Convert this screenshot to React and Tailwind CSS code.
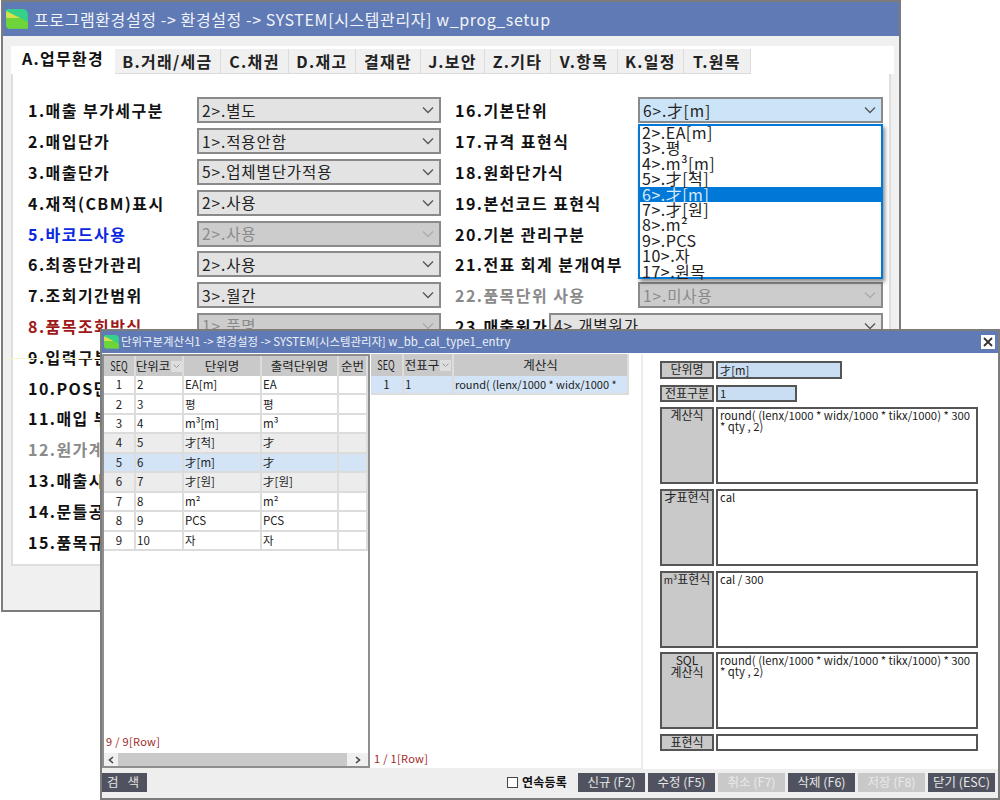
import React from "react";

const FONT = "font-['Noto_Sans_CJK_KR','Liberation_Sans',sans-serif]";

function Logo({ size = 22 }) {
  return (
    <svg width={size} height={size * 0.9} viewBox="0 0 22 20" className="shrink-0">
      <path d="M0 2 Q0 0 2 0 L16 0 Q22 0 22 6 L22 20 L4 20 Q0 20 0 16 Z" fill="#35d08a" />
      <path d="M0 2 L22 13 L22 20 L4 20 Q0 20 0 16 Z" fill="#6fd43a" />
      <path d="M0 2 L14 9 L0 9 Z" fill="#d5e04a" />
    </svg>
  );
}

function Chevron({ color = "#555" }) {
  return (
    <svg width="12" height="8" viewBox="0 0 12 8" className="shrink-0">
      <path d="M1 1.5 L6 6.5 L11 1.5" fill="none" stroke={color} strokeWidth="1.3" />
    </svg>
  );
}

function Select({ value, disabled, focus }) {
  const bg = disabled ? "bg-[#cccccc] text-[#8a8a8a]" : focus ? "bg-[#cce4f7] text-[#222]" : "bg-[#e3e3e3] text-[#222]";
  return (
    <div className={`flex-1 h-[26px] border-2 border-[#8a8a8a] flex items-center justify-between pl-[3px] pr-[5px] text-[15.5px] tracking-[0.9px] whitespace-nowrap ${bg}`}>
      <span>{value}</span>
      <Chevron color={disabled ? "#aaa" : "#555"} />
    </div>
  );
}

const leftRows = [
  ["1.매출 부가세구분", "2>.별도"],
  ["2.매입단가", "1>.적용안함"],
  ["3.매출단가", "5>.업체별단가적용"],
  ["4.재적(CBM)표시", "2>.사용"],
  ["5.바코드사용", "2>.사용", "text-[#0a28e0]", true],
  ["6.최종단가관리", "2>.사용"],
  ["7.조회기간범위", "3>.월간"],
  ["8.품목조회방식", "1>.품명", "text-[#a01818]", true],
  ["9.입력구분", ""],
  ["10.POS단", ""],
  ["11.매입 부", ""],
  ["12.원가계", "", "text-[#8a8a8a]"],
  ["13.매출시", ""],
  ["14.문틀공", ""],
  ["15.품목규", ""],
];

const rightRows = [
  ["16.기본단위", "6>.才[m]", "", false, true],
  ["17.규격 표현식", ""],
  ["18.원화단가식", ""],
  ["19.본선코드 표현식", ""],
  ["20.기본 관리구분", ""],
  ["21.전표 회계 분개여부", ""],
  ["22.품목단위 사용", "1>.미사용", "text-[#8a8a8a]", true],
];

function FormRow({ label, value, cls = "text-[#111]", disabled, focus, labelW = "w-[169px]" }) {
  return (
    <div className="h-[30.8px] flex items-center">
      <div className={`${labelW} shrink-0 font-bold text-[16px] tracking-[1.45px] whitespace-nowrap ${cls}`}>{label}</div>
      <Select value={value} disabled={disabled} focus={focus} />
    </div>
  );
}

const tabs = [
  ["B.거래/세금", "w-[106px]"],
  ["C.채권", "w-[68px]"],
  ["D.재고", "w-[67px]"],
  ["결재란", "w-[65px]"],
  ["J.보안", "w-[64px]"],
  ["Z.기타", "w-[66px]"],
  ["V.항목", "w-[67px]"],
  ["K.일정", "w-[66px]"],
  ["T.원목", "w-[67px]"],
];

const dropItems = ["2>.EA[m]", "3>.평", "4>.m³[m]", "5>.才[척]", "6>.才[m]", "7>.才[원]", "8>.m²", "9>.PCS", "10>.자", "17>.원목"];

function BackWindow() {
  return (
    <div className="absolute left-[1px] top-0 w-[900px] h-[612px] border-2 border-[#7c7c7c] bg-[#f0f0f0] overflow-hidden">
      <div className="h-[34px] bg-[#5f7ab5] flex items-center pl-[3px] gap-[6px] text-[#f2f4fa] text-[16px] whitespace-nowrap">
        <Logo />
        <span className="tracking-[0.6px]">프로그램환경설정 -&gt; 환경설정 -&gt; SYSTEM[시스템관리자] w_prog_setup</span>
      </div>
      <div className="pl-[8px] pr-[5px] pt-[10px]">
        <div className="flex items-end h-[28px] bg-white">
          <div className="w-[104px] h-[28px] bg-white flex items-start justify-center font-bold text-[16px] text-[#111] tracking-[1.3px] whitespace-nowrap">A.업무환경</div>
          {tabs.map(([t, w]) => (
            <div key={t} className={`${w} h-[25px] bg-[#f0f0f0] border-r border-b border-[#dcdcdc] flex items-center justify-center font-bold text-[16px] text-[#222] tracking-[1.3px] whitespace-nowrap`}>{t}</div>
          ))}
        </div>
        <div className="w-[880px] h-[492px] bg-white border-2 border-t-0 border-[#dedede] pl-[15px] pr-[6px] pt-[21px] flex gap-[14px]">
          <div className="w-[413px] shrink-0">
            {leftRows.map(([l, v, c, d]) => <FormRow key={l} label={l} value={v} cls={c} disabled={d} />)}
          </div>
          <div className="flex-1">
            {rightRows.map(([l, v, c, d, f]) => <FormRow key={l} label={l} value={v} cls={c || undefined} disabled={d} focus={f} labelW="w-[183px]" />)}
            <FormRow label="23.매출원가" value="4>.개별원가" labelW="w-[94px]" />
          </div>
        </div>
      </div>
      <div className="absolute left-[635px] top-[122px] w-[245px] h-[155px] bg-white border-2 border-[#0078d7] shadow-[2px_3px_4px_rgba(0,0,0,0.45)] text-[16px] tracking-[0.5px] leading-[15.4px] text-[#222]">
        <div className="-mt-[1px]">
          {dropItems.map((d, i) => (
            <div key={d} className={`h-[15.4px] pl-[2px] whitespace-nowrap ${i === 4 ? "bg-[#0078d7] text-[#dbeaf8]" : ""}`}>{d}</div>
          ))}
        </div>
      </div>
      <div className="absolute left-0 top-[356px] w-[98px] h-px bg-[#f7f5d0]" />
    </div>
  );
}

const unitRows = [
  ["1", "2", "EA[m]", "EA"],
  ["2", "3", "평", "평"],
  ["3", "4", "m³[m]", "m³"],
  ["4", "5", "才[척]", "才"],
  ["5", "6", "才[m]", "才"],
  ["6", "7", "才[원]", "才[원]"],
  ["7", "8", "m²", "m²"],
  ["8", "9", "PCS", "PCS"],
  ["9", "10", "자", "자"],
];

function rowBg(i) {
  if (i === 4) return "bg-[#d2e4f5]";
  if (i === 3 || i === 5) return "bg-[#ececec]";
  return "bg-white";
}

function SortMark() {
  return (
    <span className="w-[11px] h-[11px] bg-[#dedede] flex items-center justify-center shrink-0">
      <svg width="7" height="4" viewBox="0 0 7 4"><path d="M0.5 0.5 L3.5 3.5 L6.5 0.5" fill="none" stroke="#999" /></svg>
    </span>
  );
}

function Th({ w, children, mark }) {
  return (
    <div className={`${w} shrink-0 h-full flex items-center justify-center gap-[1px] border-r-2 border-[#dcdcdc] text-[12.5px] text-[#222] whitespace-nowrap`}>
      {children}
      {mark && <SortMark />}
    </div>
  );
}

function Td({ w, children, center }) {
  return (
    <div className={`${w} shrink-0 h-full flex items-center border-r-2 border-[#dcdcdc] text-[11.5px] text-[#222] whitespace-nowrap ${center ? "justify-center" : "pl-[1px]"}`}>{children}</div>
  );
}

function Seq() {
  return <span className="inline-block scale-x-[0.72]">SEQ</span>;
}

function UnitGrid() {
  return (
    <div className="w-[268px] h-[414px] shrink-0 border-2 border-[#8e8e8e] bg-white flex flex-col overflow-hidden">
      <div className="h-[20px] bg-[#c9c9c9] flex shrink-0">
        <Th w="w-[32px]"><Seq /></Th>
        <Th w="w-[48px]" mark>단위코</Th>
        <Th w="w-[78px]">단위명</Th>
        <Th w="w-[77px]">출력단위명</Th>
        <Th w="w-[29px]">순번</Th>
      </div>
      {unitRows.map((r, i) => (
        <div key={r[0]} className={`h-[19.44px] flex shrink-0 border-b-2 border-[#dcdcdc] ${rowBg(i)}`}>
          <Td w="w-[32px]" center>{r[0]}</Td>
          <Td w="w-[48px]">{r[1]}</Td>
          <Td w="w-[78px]">{r[2]}</Td>
          <Td w="w-[77px]">{r[3]}</Td>
          <Td w="w-[29px]"> </Td>
        </div>
      ))}
      <div className="flex-1" />
      <div className="h-[20px] mb-[2px] pl-[2px] text-[11px] text-[#a02828] leading-[20px] tracking-[0.3px] shrink-0">9 / 9[Row]</div>
      <div className="h-[13px] bg-[#f0f0f0] flex items-center shrink-0">
        <div className="w-[14px] flex justify-center">
          <svg width="6" height="8" viewBox="0 0 6 8"><path d="M5 1 L1.5 4 L5 7" fill="none" stroke="#444" strokeWidth="1.6" /></svg>
        </div>
        <div className="w-[229px] h-full bg-[#c9c9c9]" />
        <div className="flex-1 flex justify-center">
          <svg width="6" height="8" viewBox="0 0 6 8"><path d="M1 1 L4.5 4 L1 7" fill="none" stroke="#444" strokeWidth="1.6" /></svg>
        </div>
      </div>
    </div>
  );
}

function CalcGrid() {
  return (
    <div className="w-[258px] h-[414px] shrink-0 ml-[1px] flex flex-col bg-white overflow-hidden">
      <div className="h-[22px] bg-[#c9c9c9] flex shrink-0">
        <Th w="w-[33px]"><Seq /></Th>
        <Th w="w-[50px]" mark>전표구</Th>
        <Th w="w-[175px]">계산식</Th>
      </div>
      <div className="h-[19px] flex shrink-0 bg-[#d2e4f5] border-b-2 border-[#dcdcdc]">
        <Td w="w-[33px]" center>1</Td>
        <Td w="w-[50px]">1</Td>
        <Td w="w-[175px]"><span className="text-[11px]">round( (lenx/1000 * widx/1000 *</span></Td>
      </div>
      <div className="flex-1" />
      <div className="h-[20px] pl-[3px] text-[11px] text-[#a02828] leading-[20px] tracking-[0.3px] shrink-0">1 / 1[Row]</div>
    </div>
  );
}

function Field({ label, h, value, inputW = "flex-1", blue, multi, gap = "mb-[5px]" }) {
  return (
    <div className={`flex gap-[2px] ${gap}`} style={{ height: h }}>
      <div className="w-[54px] shrink-0 bg-[#c9c9c9] border-2 border-[#555] text-[12px] leading-[12px] text-[#222] text-center whitespace-nowrap">{label}</div>
      <div className={`${inputW} border-2 border-[#555] text-[11.3px] leading-[11px] text-[#222] px-[2px] ${blue ? "bg-[#c9def2] flex items-center" : "bg-white pt-[1px]"} ${multi ? "" : "whitespace-nowrap"}`}>{value}</div>
    </div>
  );
}

function DetailPanel() {
  const formula = "round( (lenx/1000 * widx/1000 * tikx/1000) * 300 * qty , 2)";
  return (
    <div className="flex-1 ml-[12px] h-[415px] bg-white border-l-2 border-[#ececec] pl-[17px] pr-[20px] pt-[7px]">
      <Field label="단위명" h="18px" value="才[m]" inputW="w-[126px]" blue gap="mb-[6px]" />
      <Field label="전표구분" h="17px" value="1" inputW="w-[81px]" blue gap="mb-[5px]" />
      <Field label="계산식" h="77px" value={formula} multi />
      <Field label="才표현식" h="77px" value="cal" multi />
      <Field label={<><span className="text-[10px]">m³</span>표현식</>} h="77px" value="cal / 300" multi gap="mb-[4px]" />
      <Field label={<>SQL<br />계산식</>} h="77px" value={formula} multi />
      <Field label="표현식" h="17px" value="" />
    </div>
  );
}

function Btn({ w = "w-[67px]", disabled, children }) {
  return (
    <div className={`${w} h-[19px] flex items-center justify-center text-[12.5px] whitespace-nowrap ${disabled ? "bg-[#c9c9c9] text-[#e9e9e9]" : "bg-[#50535f] text-[#e6e6e6]"}`}>{children}</div>
  );
}

function FrontWindow() {
  return (
    <div className="absolute left-[100px] top-[329px] w-[900px] h-[471px] border-2 border-[#7c7c7c] bg-[#eeeeee] flex flex-col">
      <div className="h-[22px] shrink-0 bg-[#5f7ab5] flex items-center pl-[2px] pr-[2px] gap-[2px] text-[#eef1f8] text-[11.4px] whitespace-nowrap">
        <Logo size={15} />
        <span className="flex-1">단위구분계산식1 -&gt; 환경설정 -&gt; SYSTEM[시스템관리자] w_bb_cal_type1_entry</span>
        <span className="w-[14px] h-[14px] bg-white flex items-center justify-center mr-[1px]">
          <svg width="10" height="10" viewBox="0 0 10 10"><path d="M1 1 L9 9 M9 1 L1 9" stroke="#333" strokeWidth="1.8" /></svg>
        </span>
      </div>
      <div className="flex pt-[1px] bg-white h-[415px] shrink-0">
        <UnitGrid />
        <CalcGrid />
        <DetailPanel />
      </div>
      <div className="flex-1 flex items-center pt-[3px] pb-[5px] pr-[3px]">
        <Btn w="w-[45px]"><span className="tracking-[3px]">검 색</span></Btn>
        <div className="flex-1" />
        <span className="w-[11px] h-[11px] border border-[#444] bg-white mr-[4px]" />
        <span className="font-bold text-[12px] text-[#111] tracking-[0.2px] mr-[11px]">연속등록</span>
        <div className="flex gap-[3px]">
          <Btn>신규 (F2)</Btn>
          <Btn>수정 (F5)</Btn>
          <Btn disabled>취소 (F7)</Btn>
          <Btn>삭제 (F6)</Btn>
          <Btn disabled>저장 (F8)</Btn>
          <Btn>닫기 (ESC)</Btn>
        </div>
      </div>
    </div>
  );
}

export default function App() {
  return (
    <div className={`relative w-[1000px] h-[800px] bg-white overflow-hidden ${FONT}`}>
      <BackWindow />
      <FrontWindow />
    </div>
  );
}
